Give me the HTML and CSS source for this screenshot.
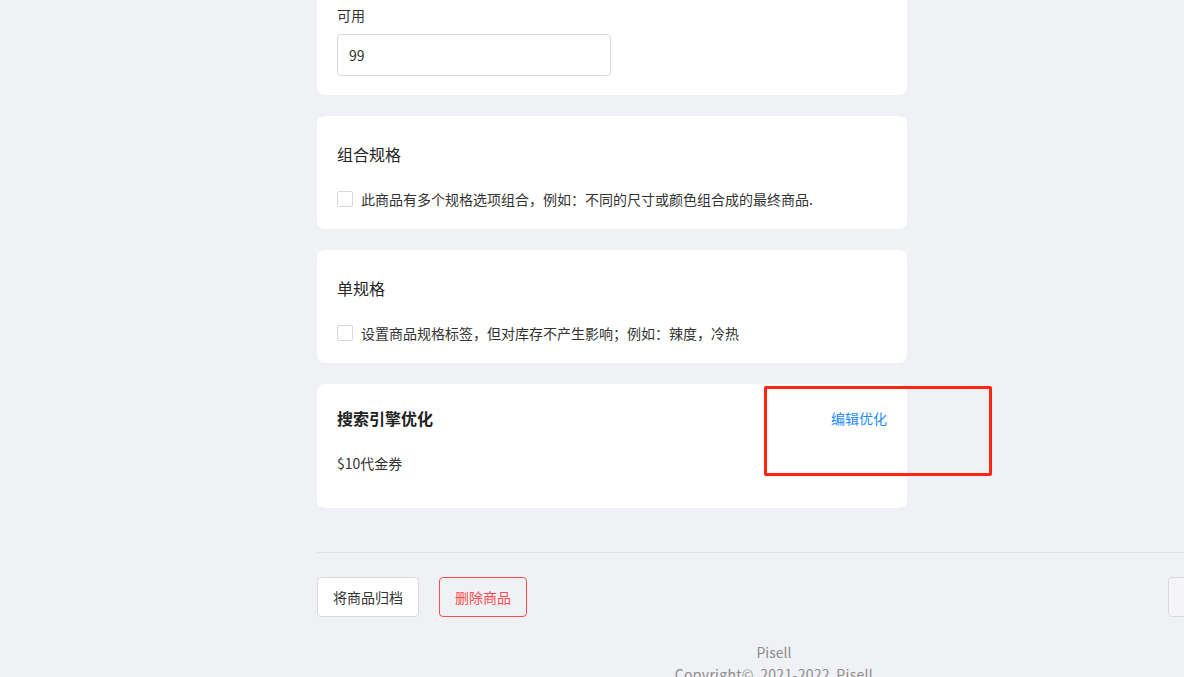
FILE: index.html
```html
<!DOCTYPE html>
<html lang="zh-CN">
<head>
    <meta charset="UTF-8">
    <meta name="viewport" content="width=device-width, initial-scale=1.0">
    <title>编辑商品</title>
    <link rel="stylesheet" href="styles.css">
</head>

<body>
    <div class="main">
        <div class="cards">
            <div class="card card-stock">
                <label class="field-label" for="available">可用</label>
                <input class="text-input" type="text" id="available" value="99">
            </div>

            <div class="card">
                <div class="card-title">组合规格</div>
                <label class="check-row">
                    <span class="checkbox"></span>
                    <span>此商品有多个规格选项组合，例如：不同的尺寸或颜色组合成的最终商品.</span>
                </label>
            </div>

            <div class="card">
                <div class="card-title">单规格</div>
                <label class="check-row">
                    <span class="checkbox"></span>
                    <span>设置商品规格标签，但对库存不产生影响；例如：辣度，冷热</span>
                </label>
            </div>

            <div class="card card-seo">
                <div class="seo-head">
                    <span class="seo-title">搜索引擎优化</span>
                    <a class="link" href="#">编辑优化</a>
                </div>
                <div class="seo-text">$10代金券</div>
                <div class="highlight"></div>
            </div>
        </div>

        <div class="actions">
            <div class="btn-group">
                <button class="btn">将商品归档</button>
                <button class="btn btn-danger">删除商品</button>
            </div>
            <div class="btn-group">
                <button class="btn btn-light">保存</button>
            </div>
        </div>

        <footer class="footer">
            <div>Pisell</div>
            <div class="copyright">Copyright© 2021-2022 Pisell</div>
        </footer>
    </div>
</body>
</html>
```

FILE: styles.css
```css
body {
    font-family: "Noto Sans CJK SC", "Noto Sans", sans-serif;
    background-color: #f0f1f5;
    color: #333;
    font-size: 14px;
    margin: 0;
    overflow: hidden;
}

.main {
    margin-left: 317px;
    margin-top: -16px;
}

.cards {
    width: 590px;
    display: flex;
    flex-direction: column;
    gap: 21px;
}

.card {
    position: relative;
    background: #fff;
    border-radius: 8px;
    padding: 20px 20px 19px;
}

.field-label {
    display: block;
    line-height: 22px;
    margin-bottom: 8px;
}

.text-input {
    box-sizing: border-box;
    width: 274px;
    height: 42px;
    padding: 0 11px;
    border: 1px solid #d9d9d9;
    border-radius: 4px;
    font-family: inherit;
    font-size: 14px;
    color: #333;
    outline: none;
}

.card-title {
    font-size: 16px;
    line-height: 36px;
    margin-bottom: 16px;
    color: #262626;
}

.check-row {
    display: flex;
    align-items: center;
    gap: 8px;
    line-height: 22px;
    font-size: 14px;
    color: #333;
}

.checkbox {
    width: 16px;
    height: 16px;
    box-sizing: border-box;
    border: 1px solid #d9d9d9;
    border-radius: 2px;
    background: #fff;
}

.card-seo {
    padding-bottom: 34px;
}

.seo-head {
    display: flex;
    justify-content: space-between;
    align-items: center;
    line-height: 28px;
}

.seo-title {
    font-size: 16px;
    font-weight: bold;
    color: #222;
}

.link {
    color: #1f8cff;
    text-decoration: none;
    font-size: 14px;
}

.seo-text {
    margin-top: 20px;
    line-height: 22px;
}

.highlight {
    position: absolute;
    left: 447px;
    top: 2px;
    width: 228px;
    height: 90px;
    box-sizing: border-box;
    border: 3px solid #ff2414;
    border-radius: 2px;
}

.actions {
    width: 951px;
    margin-top: 44px;
    padding-top: 24px;
    border-top: 1px solid #e1e2e6;
    display: flex;
    justify-content: space-between;
}

.btn-group {
    display: flex;
    gap: 20px;
}

.btn {
    height: 40px;
    padding: 0 15px;
    border: 1px solid #d9d9d9;
    border-radius: 4px;
    background: #fff;
    color: #333;
    font-family: inherit;
    font-size: 14px;
    cursor: pointer;
}

.btn-danger {
    background: transparent;
    border-color: #ff4d4f;
    color: #ff4d4f;
}

.btn-light {
    background: #f5f5f7;
    width: 100px;
}

.footer {
    width: 914px;
    text-align: center;
    color: #8c8c8c;
    margin-top: 24px;
    line-height: 22px;
}

.copyright {
    letter-spacing: 0.3px;
    word-spacing: 3px;
}
```
